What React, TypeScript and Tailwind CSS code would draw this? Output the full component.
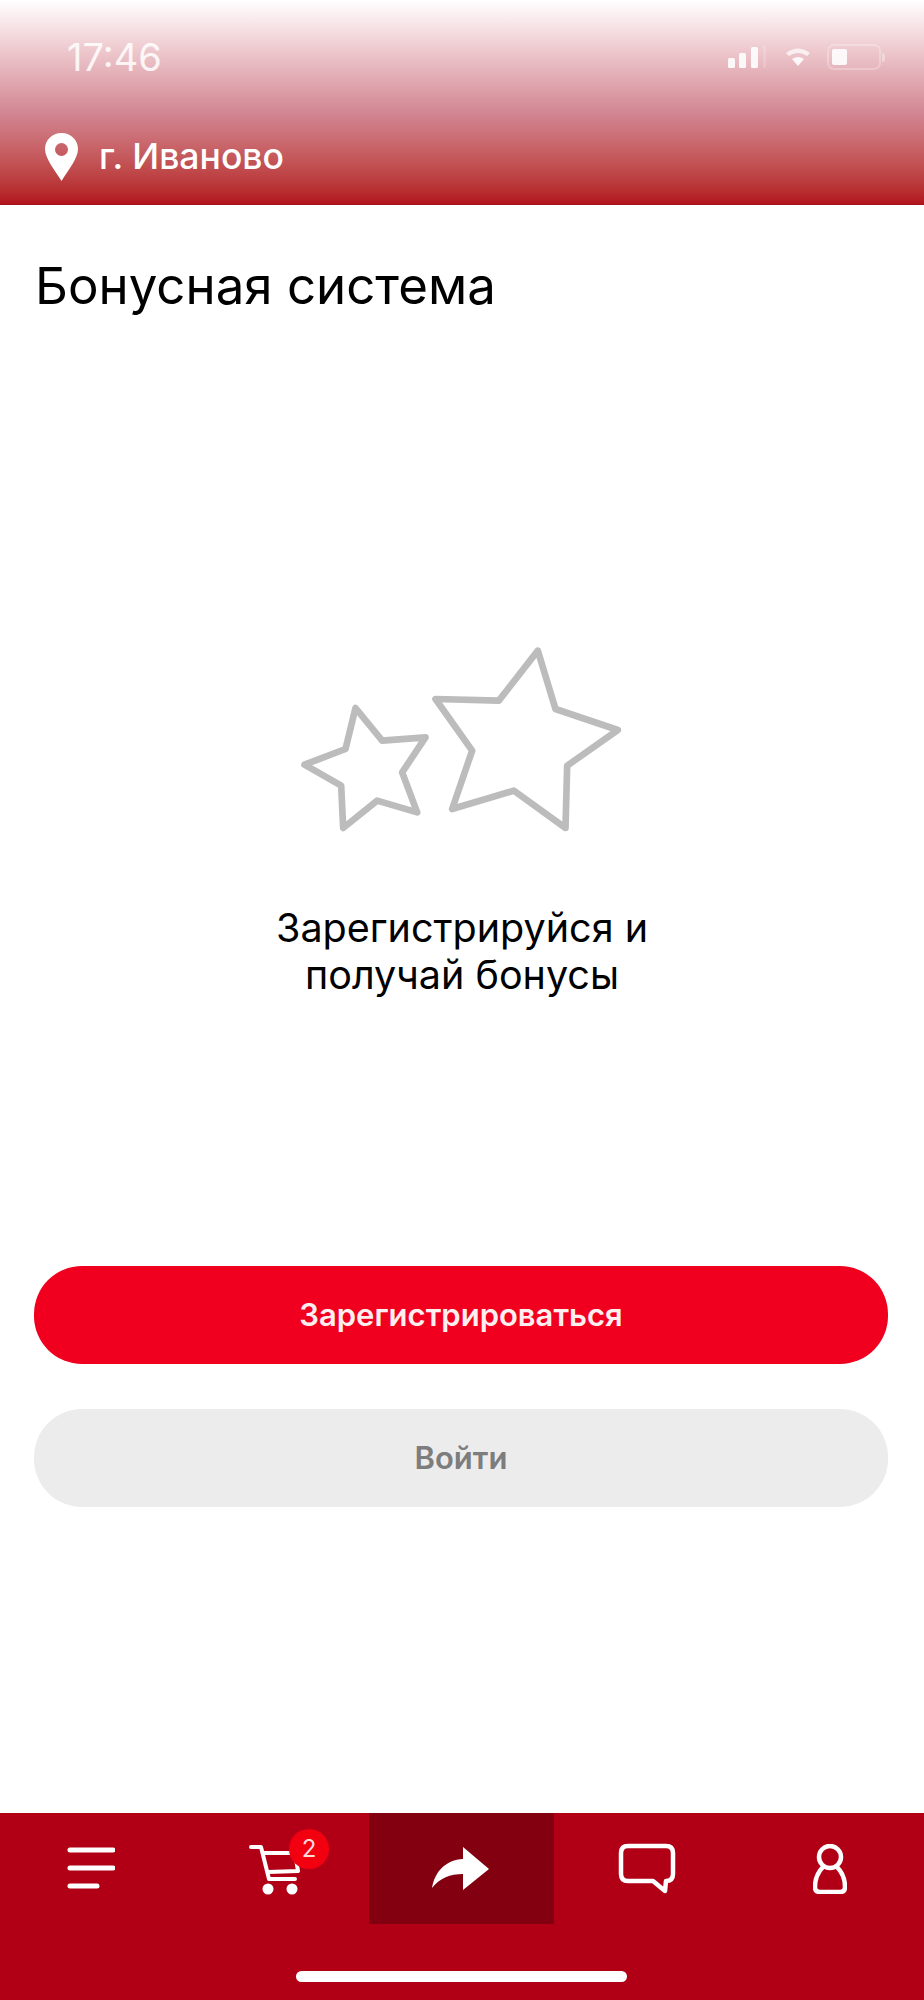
const sans = "font-['Inter','Liberation_Sans',sans-serif]";

function Stars() {
  return (
    <svg width="327" height="190" viewBox="50 40 980 570" fill="none" stroke="#bcbcbc" strokeWidth="20" strokeLinejoin="round">
      <path d="M772 60 L825 235 L1012 298 L860 405 L855 592 L700 480 L515 535 L575 360 L465 205 L655 210 Z" />
      <path d="M225 232 L305 330 L435 320 L365 425 L410 545 L290 510 L188 592 L182 465 L72 402 L195 355 Z" />
    </svg>
  );
}

function NavIcons() {
  return (
    <div className="flex h-[111px]">
      <div className="flex w-[184px] items-center justify-center pb-[1px] pr-[3px]">
        <svg width="48" height="42" viewBox="0 0 48 42" stroke="#fff" strokeWidth="5" strokeLinecap="round">
          <path d="M3 3 H46 M3 21 H46 M3 39 H30" />
        </svg>
      </div>
      <div className="flex w-[185px] items-center justify-center">
        <div className="relative ml-[-5px] h-[52px] w-[52px]">
          <svg width="52" height="52" viewBox="0 0 52 52" fill="none" stroke="#fff" strokeWidth="4" strokeLinecap="round" strokeLinejoin="round">
            <path d="M3 4 H13 L21 36 H47 M15 10 H47 L50 28 L20 29" />
            <circle cx="20" cy="46" r="3.5" fill="#fff" />
            <circle cx="44" cy="46" r="3.5" fill="#fff" />
          </svg>
          <div className={`absolute left-[41px] top-[-14px] flex h-[40px] w-[40px] items-center justify-center rounded-full bg-[#f20010] text-[24px] text-[#ffd9d9] ${sans}`}>2</div>
        </div>
      </div>
      <div className="flex w-[185px] items-center justify-center bg-[#82000f] pr-[2px]">
        <svg width="58" height="44" viewBox="0 0 58 44" fill="#fff">
          <path d="M0 41 C3 24 14 13 31 12 L31 0 L57 22 L31 43 L31 27 C18 27 8 31 0 41 Z" />
        </svg>
      </div>
      <div className="flex w-[185px] items-center justify-center">
        <svg width="58" height="52" viewBox="0 0 58 52" fill="none" stroke="#fff" strokeWidth="4.5" strokeLinejoin="round">
          <path d="M10 3 H48 Q55 3 55 10 V31 Q55 38 48 38 L47 48 L35 38 H10 Q3 38 3 31 V10 Q3 3 10 3 Z" />
        </svg>
      </div>
      <div className="flex w-[185px] items-center justify-center pr-[3px]">
        <svg width="34" height="50" viewBox="0 0 34 50" fill="none" stroke="#fff" strokeWidth="4.5" strokeLinejoin="round">
          <circle cx="17" cy="13" r="11" />
          <path d="M10 23 C4 29 2 36 2 43 Q2 48 7 48 H27 Q32 48 32 43 C32 36 30 29 24 23" />
        </svg>
      </div>
    </div>
  );
}

export default function App() {
  return (
    <div className={`flex h-[2000px] w-[924px] flex-col bg-white ${sans}`}>
      <header className="h-[205px] border-b border-[#a50f18] bg-gradient-to-b from-white via-[#d28794] via-55% to-[#b2131c] pt-[39px]">
        <div className="flex items-center justify-between pl-[67px] pr-[39px]">
          <span className="text-[38px] leading-[36px] text-white/85">17:46</span>
          <div className="flex items-center opacity-90">
            <svg width="38" height="24" viewBox="0 0 38 24" fill="#fff">
              <rect x="0" y="13" width="7" height="10" rx="1.5" />
              <rect x="11" y="8" width="7" height="15" rx="1.5" />
              <rect x="23" y="2" width="7" height="21" rx="1.5" />
              <rect x="35" y="0" width="3" height="23" rx="1.5" opacity="0.2" />
            </svg>
            <svg className="ml-[19px]" width="26" height="20" viewBox="0 0 26 20" fill="#fff">
              <path d="M1 6 Q13 -3 25 6 L22 9 Q13 3 4 9 Z" opacity="0.8" />
              <path d="M7 12 Q13 8 19 12 L13 19 Z" />
            </svg>
            <div className="ml-[16px] flex items-center gap-[1px]">
              <div className="h-[26px] w-[54px] rounded-[7px] border-2 border-white/30 p-[3px]">
                <div className="h-full w-[15px] rounded-[2px] bg-white" />
              </div>
              <div className="h-[9px] w-[3px] rounded-r-sm bg-white/40" />
            </div>
          </div>
        </div>
        <div className="mt-[58px] flex items-center gap-[21px] pl-[45px]">
          <svg width="33" height="48" viewBox="0 0 33 48">
            <path fillRule="evenodd" fill="#fff" d="M16.5 0 C26 0 33 7 33 16 C33 25 24 36 16.5 48 C9 36 0 25 0 16 C0 7 7 0 16.5 0 Z M16.5 10 A6.5 6.5 0 1 0 16.5 23 A6.5 6.5 0 1 0 16.5 10 Z" />
          </svg>
          <span className="text-[35.5px] font-medium leading-[40px] text-white">г. Иваново</span>
        </div>
      </header>

      <main className="flex flex-1 flex-col">
        <h1 className="ml-[35px] mt-[54px] text-[51px] font-normal leading-[54px] text-black">Бонусная система</h1>
        <div className="ml-[297px] mt-[331px]">
          <Stars />
        </div>
        <p className="mt-[71px] text-center text-[39.5px] leading-[47px] text-black">
          Зарегистрируйся и
          <br />
          получай бонусы
        </p>
        <div className="ml-[34px] mr-[36px] mt-[267px] flex flex-col gap-[45px]">
          <button className="h-[98px] rounded-[48px] bg-[#f0001e] text-[31px] font-semibold text-[#ffeef0]">Зарегистрироваться</button>
          <button className="h-[98px] rounded-[48px] bg-[#ececec] text-[31px] font-semibold text-[#7d7d7d]">Войти</button>
        </div>
      </main>

      <nav className="h-[187px] bg-[#b10015]">
        <NavIcons />
        <div className="mt-[47px] flex justify-center pr-[2px]">
          <div className="h-[11px] w-[331px] rounded-full bg-white" />
        </div>
      </nav>
    </div>
  );
}
